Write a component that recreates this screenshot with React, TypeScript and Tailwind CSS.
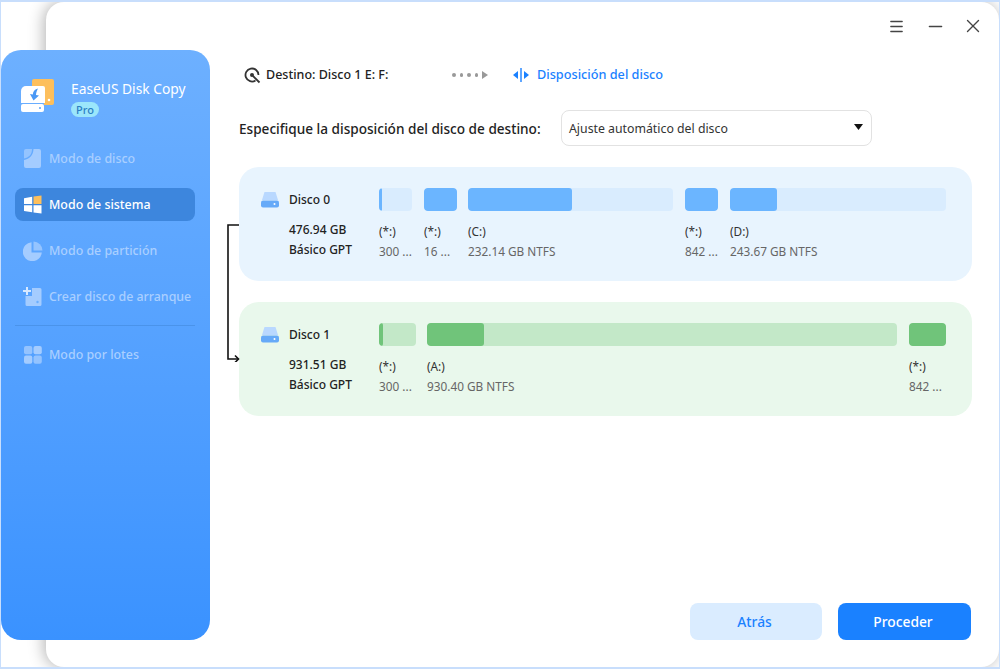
import { Menu, Minus, X } from "lucide-react";

const font = "font-['Noto_Sans','Open_Sans',sans-serif]";

function DiskIcon() {
  return (
    <svg width="18" height="16" viewBox="0 0 18 16" className="shrink-0">
      <path d="M3.500 0h11l2.500 8H1z" fill="#b9d8ff" />
      <rect x="0" y="8.500" width="18" height="7" rx="2" fill="#66aaf8" />
      <circle cx="13.500" cy="12" r="1" fill="#fff" />
    </svg>
  );
}

function Logo() {
  return (
    <svg width="34" height="34" viewBox="0 0 34 34" className="shrink-0">
      <path d="M11 2a2 2 0 0 1 2-2h18a2 2 0 0 1 2 2v22a2 2 0 0 1-2 2h-8V9H11z" fill="#fdbf5c" />
      <circle cx="28" cy="21" r="1.300" fill="#fff" />
      <path d="M5 7h17a2 2 0 0 1 2 2v15H0V12a5 5 0 0 1 5-5z" fill="#fff" />
      <path d="M17 9.500c-3 .5-5 2.500-5.200 6l-2.800-.5 3.500 6.500 5.500-5-3-.6c.2-2.500 1-4.500 2-6.400z" fill="#4a98f5" />
      <rect x="0" y="25" width="23" height="8" rx="2" fill="#fff" />
      <circle cx="19" cy="29" r="1" fill="#5aa2f7" />
    </svg>
  );
}

function NavIcon({ kind }: { kind: string }) {
  if (kind === "disk")
    return (
      <svg width="17" height="19" viewBox="0 0 17 19" fill="#a4ccff">
        <path d="M2 0h6c0 5-2.500 8.500-8 9.500V2a2 2 0 0 1 2-2z" opacity=".75" />
        <path d="M9.500 0H15a2 2 0 0 1 2 2v15a2 2 0 0 1-2 2H2a2 2 0 0 1-2-2v-6c5.500-.8 9.300-5 9.500-11z" />
      </svg>
    );
  if (kind === "windows")
    return (
      <svg width="18" height="19" viewBox="0 0 18 19">
        <path d="M0 3.200 8.200 1.800V9H0z" fill="#fff" />
        <path d="M9.500 1.500 17.500.5V9H9.500z" fill="#fdbf5c" />
        <path d="M0 10.200h8.200v7L0 16z" fill="#fff" />
        <path d="M9.500 10.200h8v8.300l-8-1.100z" fill="#fff" />
      </svg>
    );
  if (kind === "pie")
    return (
      <svg width="20" height="20" viewBox="0 0 20 20" fill="#a4ccff">
        <path d="M8.500 1.200V11.500H18.800A9.500 9.500 0 1 1 8.500 1.200z" />
        <path d="M10.500 0.500A9 9 0 0 1 19.500 9.500H10.500z" opacity=".8" />
      </svg>
    );
  if (kind === "boot")
    return (
      <svg width="19" height="19" viewBox="0 0 19 19" fill="#a4ccff">
        <path d="M9 1h8a1.500 1.500 0 0 1 1.500 1.500v15A1.500 1.500 0 0 1 17 19H4a1.500 1.500 0 0 1-1.500-1.500V9H9z" />
        <path d="M3 0h2v3h3v2H5v3H3V5H0V3h3z" fill="#d6e8ff" />
        <circle cx="14.500" cy="15" r="1.200" fill="#6aaeff" />
      </svg>
    );
  return (
    <svg width="18" height="18" viewBox="0 0 18 18" fill="#a4ccff">
      <rect x="0" y="0" width="8.300" height="8.300" rx="2" opacity=".8" />
      <rect x="9.500" y="0" width="8.300" height="8.300" rx="2" />
      <rect x="0" y="9.500" width="8.300" height="8.300" rx="2" />
      <rect x="9.500" y="9.500" width="8.300" height="8.300" rx="2" opacity=".8" />
    </svg>
  );
}

function NavItem({ kind, label, active }: { kind: string; label: string; active?: boolean }) {
  return (
    <div
      className={
        active
          ? "flex h-[33px] items-center rounded-lg bg-[#3d86dd] text-white"
          : "flex h-[33px] items-center rounded-lg text-[#a9cfff]"
      }
    >
      <span className="flex w-[34px] shrink-0 justify-center pl-[1px]">
        <NavIcon kind={kind} />
      </span>
      <span className="whitespace-nowrap pt-[2px] text-[12.400px] font-medium">{label}</span>
    </div>
  );
}

function Partition({
  box,
  fill,
  track,
  color,
  name,
  size,
}: {
  box: string;
  fill: string;
  track: string;
  color: string;
  name: string;
  size: string;
}) {
  return (
    <div className={box}>
      <div className={`h-[23px] overflow-hidden rounded-[4px] ${track}`}>
        <div className={`h-full rounded-[3px] ${fill} ${color}`} />
      </div>
      <p className="mt-[12px] h-[17px] text-[11.800px] leading-[17px] text-[#333]">{name}</p>
      <p className="mt-[3px] whitespace-nowrap text-[11.800px] leading-[17px] text-[#666]">{size}</p>
    </div>
  );
}

function DiskCard({
  tone,
  name,
  size,
  children,
}: {
  tone: string;
  name: string;
  size: string;
  children: React.ReactNode;
}) {
  return (
    <div className={`flex h-[114px] rounded-[20px] pl-[22px] pr-[26px] pt-[21px] ${tone}`}>
      <div className="w-[118px] shrink-0">
        <div className="flex h-[23px] items-center gap-[10px]">
          <DiskIcon />
          <span className="text-[12px] font-medium text-[#222]">{name}</span>
        </div>
        <div className="mt-[9px] pl-[28px] text-[12px] font-medium leading-[20px] text-[#222]">
          <p>{size}</p>
          <p>Básico GPT</p>
        </div>
      </div>
      <div className="flex flex-1 justify-between">{children}</div>
    </div>
  );
}

export default function App() {
  return (
    <div className={`${font} h-[669px] w-[1000px] overflow-hidden border-2 border-l border-r border-[#c8defc] bg-white pl-[45px]`}>
      <div className="flex h-full w-full rounded-[18px] bg-white shadow-[-2px_0_16px_rgba(0,0,0,0.3)]">
        <aside className="mb-[27px] ml-[-45px] mt-[48px] flex w-[209px] shrink-0 flex-col rounded-[20px] bg-gradient-to-b from-[#6db0ff] to-[#3a92ff] pl-[14px] pr-[15px]">
          <div className="mt-[29px] flex items-start gap-[16px] pl-[6px]">
            <Logo />
            <div>
              <p className="whitespace-nowrap text-[13.800px] leading-[20px] text-white">EaseUS Disk Copy</p>
              <span className="mt-[3px] block w-[28px] rounded-full bg-[#9be6fb] text-center text-[11px] font-medium leading-[15px] text-[#2b7fc4]">
                Pro
              </span>
            </div>
          </div>
          <div className="mt-[25px] flex flex-col gap-[13px]">
            <NavItem kind="disk" label="Modo de disco" />
            <NavItem kind="windows" label="Modo de sistema" active />
            <NavItem kind="pie" label="Modo de partición" />
            <NavItem kind="boot" label="Crear disco de arranque" />
          </div>
          <div className="mt-[12px] h-px bg-[#4a93ea]" />
          <div className="mt-[12px]">
            <NavItem kind="batch" label="Modo por lotes" />
          </div>
        </aside>

        <main className="flex min-w-0 flex-1 flex-col pl-[29px] pr-[27px]">
          <div className="mr-[-12px] flex h-[48px] items-center justify-end text-[#444]">
            <Menu size={17} strokeWidth={1.9} />
            <Minus size={21} strokeWidth={1.6} className="ml-[20px]" />
            <X size={22} strokeWidth={1.5} className="ml-[16px]" />
          </div>

          <div className="mt-[13px] flex h-[24px] items-center pl-[5px] text-[12.500px]">
            <svg width="17" height="17" viewBox="0 0 17 17" fill="none" stroke="#333" strokeWidth="1.800">
              <path d="M11.500 13.500A6.500 6.500 0 1 1 14.500 8" />
              <circle cx="8" cy="8" r="2" fill="#333" stroke="none" />
              <path d="M9 9l6.500 6.500" />
            </svg>
            <span className="ml-[5px] w-[186px] font-medium text-[#222]">Destino: Disco 1 E: F:</span>
            <div className="flex w-[61px] items-center gap-[4px]">
              <i className="size-[3.500px] rounded-full bg-[#999]" />
              <i className="size-[3.500px] rounded-full bg-[#999]" />
              <i className="size-[3.500px] rounded-full bg-[#999]" />
              <i className="size-[3.500px] rounded-full bg-[#999]" />
              <svg width="6" height="8" viewBox="0 0 6 8" fill="#999"><path d="M0 0l6 4-6 4z" /></svg>
            </div>
            <svg width="16" height="14" viewBox="0 0 16 14" fill="#1a81ff">
              <path d="M5 3v8L0 7z" />
              <path d="M11 3v8l5-4z" />
              <rect x="7.300" y="0" width="1.400" height="14" />
            </svg>
            <span className="ml-[8px] text-[12.700px] font-medium text-[#1a81ff]">Disposición del disco</span>
          </div>

          <div className="mt-[23px] flex items-center">
            <span className="w-[322px] pt-[2px] text-[13.600px] font-medium text-[#222]">
              Especifique la disposición del disco de destino:
            </span>
            <div className="flex h-[36px] w-[311px] items-center justify-between rounded-lg border border-[#e2e2e2] pl-[7px] pr-[8px] text-[12.300px] text-[#333]">
              <span className="pt-[2px]">Ajuste automático del disco</span>
              <svg width="9" height="6" viewBox="0 0 9 6" fill="#111" className="mb-[3px]"><path d="M0 0h9L4.500 6z" /></svg>
            </div>
          </div>

          <div className="relative mt-[21px] flex flex-col gap-[21px]">
            <DiskCard tone="bg-[#e8f4fe]" name="Disco 0" size="476.94 GB">
              <Partition box="w-[33px]" track="bg-[#d9ecfe]" fill="w-[3px]" color="bg-[#6bb5ff]" name="(*:)" size="300 ..." />
              <Partition box="ml-[12px] w-[33px]" track="bg-[#d9ecfe]" fill="w-full" color="bg-[#6bb5ff]" name="(*:)" size="16 ..." />
              <Partition box="ml-[11px] w-[205px]" track="bg-[#d9ecfe]" fill="w-[104px]" color="bg-[#6bb5ff]" name="(C:)" size="232.14 GB NTFS" />
              <Partition box="ml-[12px] w-[33px]" track="bg-[#d9ecfe]" fill="w-full" color="bg-[#6bb5ff]" name="(*:)" size="842 ..." />
              <Partition box="ml-[12px] w-[216px]" track="bg-[#d9ecfe]" fill="w-[47px]" color="bg-[#6bb5ff]" name="(D:)" size="243.67 GB NTFS" />
            </DiskCard>
            <DiskCard tone="bg-[#e9f8ec]" name="Disco 1" size="931.51 GB">
              <Partition box="w-[37px]" track="bg-[#c3e8c8]" fill="w-[4px]" color="bg-[#70c47a]" name="(*:)" size="300 ..." />
              <Partition box="ml-[11px] w-[470px]" track="bg-[#c3e8c8]" fill="w-[57px]" color="bg-[#70c47a]" name="(A:)" size="930.40 GB NTFS" />
              <Partition box="ml-[12px] w-[37px]" track="bg-[#c3e8c8]" fill="w-full" color="bg-[#70c47a]" name="(*:)" size="842 ..." />
            </DiskCard>
            <svg width="13" height="140" viewBox="0 0 13 140" fill="none" stroke="#111" strokeWidth="1.600" className="absolute left-[-12px] top-[55px]">
              <path d="M12 3H1V137H11" />
              <path d="M8 133.500L11.500 137L8 140.500" />
            </svg>
          </div>

          <div className="mb-[27px] mt-auto flex justify-end gap-[16px] pr-[1px]">
            <button className="h-[37px] w-[132px] rounded-lg bg-[#daecff] pr-[3px] pt-[2px] text-[13.800px] font-medium text-[#1a81ff]">Atrás</button>
            <button className="h-[37px] w-[133px] rounded-lg bg-[#1a81ff] pr-[3px] pt-[2px] text-[13.800px] font-medium text-white">Proceder</button>
          </div>
        </main>
      </div>
    </div>
  );
}
